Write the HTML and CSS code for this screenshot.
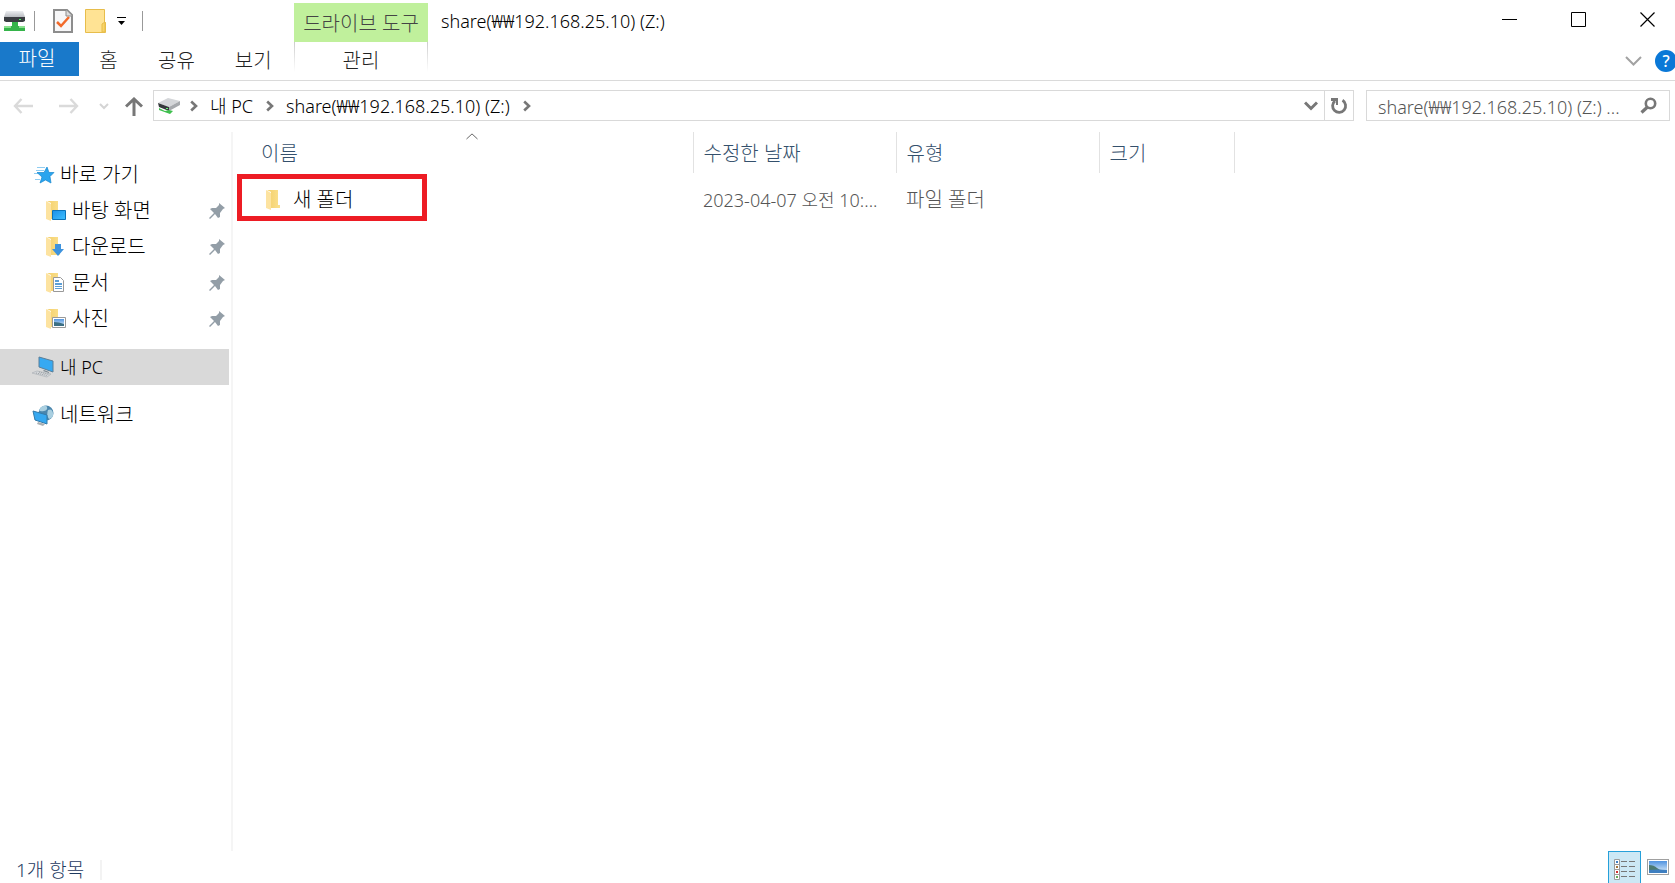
FILE: index.html
```html
<!DOCTYPE html>
<html lang="ko">
<head>
<meta charset="utf-8">
<title>share(₩₩192.168.25.10) (Z:)</title>
<link rel="stylesheet" href="styles.css">
</head>
<body>
<svg class="defs" aria-hidden="true">
  <defs>
    <linearGradient id="gold" x1="0" x2="1"><stop offset="0" stop-color="#f3cf6b"/><stop offset="1" stop-color="#fbe08d"/></linearGradient>
    <linearGradient id="blue" x1="0" y1="0" x2="1" y2="1"><stop offset="0" stop-color="#1a8fe8"/><stop offset="1" stop-color="#3fc0ff"/></linearGradient>
    <linearGradient id="metal" x1="0" x2="0" y1="0" y2="1"><stop offset="0" stop-color="#eceef1"/><stop offset="1" stop-color="#b9bcc1"/></linearGradient>
    <linearGradient id="sky" x1="0" x2="0" y1="0" y2="1"><stop offset="0" stop-color="#4f93e0"/><stop offset="1" stop-color="#e3f1fa"/></linearGradient>
    <symbol id="folder" viewBox="0 0 14 20"><path d="M1 0h11v15h2v3H5V2z" fill="url(#gold)"/><path d="M0 0l5 3v17l-5-2z" fill="#fde3a0"/></symbol>
    <symbol id="pin" viewBox="0 0 16 16"><path d="M10 0l6 5-2 1-3 4v4l-2 1-3-4-5 5-1-1 5-5-4-4 2-1 4 0 3-3z" fill="#939ea7"/></symbol>
    <symbol id="chev" viewBox="0 0 8 12"><path d="M1.200 1.500L6 6 1.200 10.500" fill="none" stroke="#777" stroke-width="2.600"/></symbol>
    <symbol id="photo" viewBox="0 0 22 16"><path d="M0 0h22v16H0z" fill="#a0a0a0"/><path d="M1 1h20v14H1z" fill="#fff"/><path d="M2 2h18v12H2z" fill="url(#sky)"/><path d="M2 6q5 0 8 3t10 2v1H2z" fill="#4c7a72"/><path d="M2 11q9-1 18 0v3H2z" fill="#3f7fc0"/></symbol>
  </defs>
</svg>
<div class="window">
  <header class="ribbon">
    <div class="quick">
      <svg width="22" height="22" viewBox="0 0 22 22" aria-hidden="true"><path d="M2 1h17l2 6H0z" fill="url(#metal)"/><path d="M0 7h21v4l-2 1H2l-2-1z" fill="#3a3d42"/><path d="M15 9h2v1h-2z" fill="#4df06a"/><path d="M8 12h6v4h7v5H0v-5h8z" fill="#35b44a"/><path d="M0 16h7v2H0zM15 16h6v2h-6z" fill="#8be08f"/></svg>
      <i class="bar"></i>
      <button class="plain props" aria-label="속성"><svg width="20" height="24" viewBox="0 0 20 24"><path d="M1 1h13l5 5v17H1z" fill="#f7f7f8" stroke="#8d8d8d" stroke-width="2"/><path d="M13 1v6h6" fill="#ddd" stroke="#8d8d8d"/><path d="M4 13l4 4 8-9" fill="none" stroke="#f26a2a" stroke-width="2.500"/></svg></button>
      <button class="plain newf" aria-label="새 폴더 만들기"><svg width="21" height="24" viewBox="0 0 21 24"><path d="M.5.500h19v13h1v10H.5z" fill="#ffe394" stroke="#e7bd4b"/><path d="M17 23v-8l3-2v10z" fill="#f9d467" stroke="#e7bd4b"/></svg></button>
      <button class="plain" aria-label="빠른 실행 도구 모음 사용자 지정"><svg width="9" height="8" viewBox="0 0 9 8"><path d="M0 0h9v1H0zM1 4h7L4.500 8z" fill="#000"/></svg></button>
      <i class="bar end"></i>
    </div>
    <div class="context">드라이브 도구</div>
    <div class="title">share(₩₩192.168.25.10) (Z:)</div>
    <div class="controls">
      <button class="plain" aria-label="최소화"><svg width="15" height="15" viewBox="0 0 15 15"><path d="M0 7h15v1H0z"/></svg></button>
      <button class="plain" aria-label="최대화"><svg width="15" height="15" viewBox="0 0 15 15"><path d="M.5.500h14v14H.5z" fill="none" stroke="#000"/></svg></button>
      <button class="plain" aria-label="닫기"><svg width="15" height="15" viewBox="0 0 15 15"><path d="M.5.500l14 14M14.500.500l-14 14" fill="none" stroke="#000" stroke-width="1.200"/></svg></button>
    </div>
    <nav class="tabs">
      <button class="tab file">파일</button>
      <button class="tab home">홈</button>
      <button class="tab">공유</button>
      <button class="tab">보기</button>
    </nav>
    <button class="tab manage">관리</button>
    <div class="extras">
      <button class="plain" aria-label="리본 확장"><svg width="17" height="10" viewBox="0 0 17 10"><path d="M1 1l7.500 7.500L16 1" fill="none" stroke="#a2a2a2" stroke-width="2"/></svg></button>
      <button class="help" aria-label="도움말">?</button>
    </div>
  </header>

  <div class="navbar">
    <div class="arrows">
      <button class="plain" aria-label="뒤로"><svg width="20" height="16" viewBox="0 0 20 16"><path d="M8.500 1L2 8l6.500 7M2 8h18" fill="none" stroke="#dadada" stroke-width="2.400"/></svg></button>
      <button class="plain fwd" aria-label="앞으로"><svg width="20" height="16" viewBox="0 0 20 16"><path d="M11.500 1L18 8l-6.500 7M18 8H0" fill="none" stroke="#dadada" stroke-width="2.400"/></svg></button>
      <button class="plain recent" aria-label="최근 위치"><svg width="10" height="7" viewBox="0 0 10 7"><path d="M1 1l4 4 4-4" fill="none" stroke="#d4d4d4" stroke-width="2"/></svg></button>
      <button class="plain" aria-label="위로"><svg width="18" height="19" viewBox="0 0 18 19"><path d="M1 9.500L9 2l8 7.500M9 2v17" fill="none" stroke="#777" stroke-width="3"/></svg></button>
    </div>
    <div class="address">
      <svg class="drive" width="24" height="17" viewBox="0 0 24 17" aria-hidden="true"><path d="M1 6L11 1l12 3-11 6z" fill="#d4d6d9"/><path d="M1 6l11 4v4L2 10z" fill="#35383c"/><path d="M12 10l11-6v4l-11 6z" fill="#a6a9ad"/><path d="M2 11l6 3 4-1 4 1-3 3-11-4z" fill="#3fc04e"/><path d="M9 11h2v1H9z" fill="#5cff70"/></svg>
      <svg class="sep" width="8" height="12"><use href="#chev"/></svg>
      <a href="#pc">내 PC</a>
      <svg class="sep" width="8" height="12"><use href="#chev"/></svg>
      <a href="#share">share(₩₩192.168.25.10) (Z:)</a>
      <svg class="sep" width="8" height="12"><use href="#chev"/></svg>
      <button class="plain drop" aria-label="이전 위치"><svg width="14" height="10" viewBox="0 0 14 10"><path d="M1 1.500l6 6 6-6" fill="none" stroke="#777" stroke-width="3"/></svg></button>
      <button class="plain refresh" aria-label="새로 고침"><svg width="18" height="18" viewBox="0 0 18 18"><path d="M12.500 3.300a6.500 6.500 0 1 1-7.500.500" fill="none" stroke="#777" stroke-width="2.800"/><path d="M1 1h7v7H6V4H1z" fill="#777"/></svg></button>
    </div>
    <div class="search">
      <input type="text" aria-label="검색" placeholder="share(₩₩192.168.25.10) (Z:) ...">
      <button class="plain" aria-label="검색 실행"><svg width="17" height="17" viewBox="0 0 17 17"><circle cx="10.500" cy="6.500" r="4.700" fill="none" stroke="#777" stroke-width="2.600"/><path d="M7.500 10L1.500 15.500" stroke="#777" stroke-width="3.200"/></svg></button>
    </div>
  </div>

  <div class="body">
    <nav class="tree">
      <a class="node top" href="#quick"><svg width="24" height="20" viewBox="0 0 24 20"><path d="M5 2h8v1H5zM4 5h8v1H4zM2 8h5v1H2zM3 14h5v1H3z" fill="#8fcdf2"/><path d="M15 2l2 5.500H22l-4 4 1 6.500-5.500-3L8 18l2-6-5-4.500h7z" fill="#29a4ee" stroke="#1786cf" stroke-width=".7"/></svg>바로 가기</a>
      <a class="node" href="#desktop"><svg width="20" height="20" viewBox="0 0 20 20"><use href="#folder" width="14" height="20"/><path d="M6.500 9.500h13v9h-13z" fill="url(#blue)" stroke="#0b72b8"/></svg>바탕 화면<svg class="pin" width="16" height="16"><use href="#pin"/></svg></a>
      <a class="node" href="#downloads"><svg width="20" height="20" viewBox="0 0 20 20"><use href="#folder" width="14" height="20"/><path d="M9 7h6v5h3l-6 7-6-7h3z" fill="#3e93dd"/></svg>다운로드<svg class="pin" width="16" height="16"><use href="#pin"/></svg></a>
      <a class="node" href="#documents"><svg width="20" height="20" viewBox="0 0 20 20"><use href="#folder" width="14" height="20"/><path d="M7.500 4.500h7l3 3v11h-10z" fill="#fff" stroke="#999"/><path d="M9 7h4v2H9zM9 10h7v2H9zM9 13h7v1H9zM9 15h7v1H9z" fill="#5c9fd6"/></svg>문서<svg class="pin" width="16" height="16"><use href="#pin"/></svg></a>
      <a class="node" href="#pictures"><svg width="20" height="20" viewBox="0 0 20 20"><use href="#folder" width="14" height="20"/><path d="M6.500 8.500h13v10h-13z" fill="#fff" stroke="#999"/><path d="M8 10h10v7H8z" fill="url(#sky)"/><path d="M8 13q5 0 10 2v2H8z" fill="#3c6f83"/></svg>사진<svg class="pin" width="16" height="16"><use href="#pin"/></svg></a>
      <a class="node top spaced selected latin" href="#pc"><svg width="24" height="22" viewBox="0 0 24 22"><path d="M7 1l14 4v11L7 11z" fill="#36a9f2" stroke="#5b7f98"/><path d="M12 14l5 2v1l-6-2z" fill="#7b8790"/><path d="M5 15l14 3-4 3L0 17z" fill="#d5d8db" stroke="#aeb3b7" stroke-width=".7"/><path d="M4 17l11 2.500M7 16l10 2.500" stroke="#9a9fa3" stroke-dasharray="1 1"/></svg>내 PC</a>
      <a class="node top spaced" href="#network"><svg width="24" height="22" viewBox="0 0 24 22"><circle cx="14" cy="9" r="7.500" fill="#4a86ad"/><path d="M9 3q5-3 6 0t-3 4-5-1zM16 6q4-2 5 3t-4 6q-3-4-1-9z" fill="#a9cfe0"/><path d="M1 7l14 4v9L3 16z" fill="#35a8f0" stroke="#337aa9"/><path d="M6 18l7 2-2 2-6-2z" fill="#a9afb3"/></svg>네트워크</a>
    </nav>
    <main class="list">
      <table>
        <colgroup><col class="c-name"><col class="c-date"><col class="c-date"><col class="c-size"><col></colgroup>
        <thead><tr>
          <th class="name">이름<svg class="sort" width="12" height="7" viewBox="0 0 12 7"><path d="M.5 6L6 .900 11.500 6" fill="none" stroke="#666"/></svg></th>
          <th>수정한 날짜</th><th>유형</th><th>크기</th><th class="rest"></th>
        </tr></thead>
        <tbody><tr>
          <td class="name"><span class="item"><svg width="14" height="20"><use href="#folder"/></svg>새 폴더</span><span class="mark"></span></td>
          <td class="latin">2023-04-07 오전 10:...</td><td>파일 폴더</td><td></td><td></td>
        </tr></tbody>
      </table>
    </main>
  </div>

  <footer class="status">
    <span class="count">1개 항목</span>
    <button class="view on" aria-label="자세히"><svg width="22" height="22" viewBox="0 0 22 22"><path d="M.5.500h5v5h-5zM.5 5.500h5v5h-5zM.5 10.500h5v5h-5zM.5 15.500h5v5h-5z" fill="#fff" stroke="#9b9b9b"/><path d="M2 2h2v2H2z" fill="#3e7fc4"/><path d="M2 7h2v2H2z" fill="#a5763c"/><path d="M2 12h2v2H2z" fill="#d03030"/><path d="M2 17h2v2H2z" fill="#5fae58"/><path d="M7 2h6v1H7zM15 2h6v1h-6zM7 7h6v1H7zM15 7h6v1h-6zM7 12h6v1H7zM15 12h6v1h-6zM7 17h6v1H7zM15 17h6v1h-6z" fill="#777"/></svg></button>
    <button class="view" aria-label="큰 아이콘"><svg width="22" height="16"><use href="#photo"/></svg></button>
  </footer>
</div>
</body>
</html>
```
FILE: styles.css
```css
* { box-sizing: border-box; }
body {
  margin: 0;
  overflow: hidden;
  background: #fff;
  color: #000;
  font: 300 18px/24px "Noto Sans", "Noto Sans CJK KR", sans-serif;
}
svg { display: block; flex: none; }
button, input { font: inherit; color: inherit; }
a { color: inherit; text-decoration: none; }
.defs { position: absolute; width: 0; height: 0; }
.plain { border: 0; padding: 0; background: none; display: flex; align-items: center; justify-content: center; }
.window { min-height: 100vh; display: flex; flex-direction: column; }

.ribbon {
  display: grid;
  grid-template-columns: 294px 134px 1fr auto;
  grid-template-rows: 42px 38px;
  border-bottom: 1px solid #dadada;
}
.quick { display: flex; align-items: center; padding-left: 4px; }
.bar { width: 1px; height: 20px; margin-left: 8px; background: #999; }
.bar.end { margin-left: 16px; }
.props { margin-left: 18px; }
.newf { margin: 0 11px 0 12px; }
.context { margin-top: 3px; padding-top: 9px; background: #c0f09c; color: #444; font-size: 20px; text-align: center; white-space: nowrap; }
.title { padding: 9px 0 0 13px; white-space: nowrap; }
.controls { display: flex; gap: 54px; padding: 0 20px 3px 0; align-items: center; }
.tabs { display: flex; align-items: flex-start; }
.tab { border: 0; padding: 0 20px; height: 38px; background: none; color: #222; font-size: 20px; white-space: nowrap; }
.tab.file { width: 79px; height: 34px; background: #1979ca; color: #fff; padding: 0 5px 0 0; }
.tab.home { width: 59px; }
.tab.manage {
  padding: 0;
  background: linear-gradient(#ccc, #fff) left / 1px 30px no-repeat, linear-gradient(#ccc, #fff) right / 1px 30px no-repeat;
  background-position: left top, right top;
}
.extras { grid-column: 4; display: flex; justify-content: flex-end; align-items: center; gap: 13px; margin-right: -2px; }
.help { width: 22px; height: 22px; border: 0; border-radius: 50%; padding: 0; background: #0a78d7; color: #fff; font-size: 16px; font-weight: 500; line-height: 22px; }

.navbar { display: flex; padding: 9px 5px 10px 13px; height: 51px; }
.arrows { display: flex; align-items: center; width: 140px; flex: none; }
.fwd { margin-left: 26px; }
.recent { margin: 0 16px 0 20px; }
.address { flex: 1; display: flex; align-items: center; border: 1px solid #d9d9d9; height: 31px; padding-left: 3px; white-space: nowrap; }
.address .sep { margin: 0 12px 0 9px; }
.address a + .sep { margin-left: 13px; }
.drop { margin-left: auto; width: 27px; height: 29px; }
.refresh { width: 29px; height: 29px; border-left: 1px solid #d9d9d9; }
.search { width: 304px; margin-left: 12px; height: 31px; border: 1px solid #d9d9d9; display: flex; align-items: center; padding: 0 12px 0 11px; }
.search input { flex: 1; min-width: 0; border: 0; padding: 2px 0 0; outline: 0; background: none; }
.search input::placeholder { color: #555; opacity: 1; }

.body { flex: 1; display: flex; }
.tree { width: 233px; flex: none; padding: 25px 2px 0 0; border-right: 2px solid #f5f5f5; font-size: 20px; }
.node { display: flex; align-items: center; height: 36px; padding: 0 4px 0 46px; gap: 6px; white-space: nowrap; }
.node.top { padding-left: 32px; gap: 4px; }
.spaced { margin-top: 12px; }
.selected { background: #d9d9d9; }
.latin { font-size: 18px; }
.pin { margin-left: auto; }

.list { flex: 1; }
table { width: 100%; border-collapse: collapse; table-layout: fixed; font-size: 20px; }
.c-name { width: 460px; }
.c-date { width: 203px; }
.c-size { width: 135px; }
th, td { padding: 2px 0 0 10px; text-align: left; font-weight: inherit; white-space: nowrap; }
th { position: relative; height: 41px; color: #34506c; border-right: 1px solid #e2e2e2; }
th.rest { border: 0; }
td { height: 52px; color: #555; }
th.name { padding-left: 28px; }
td.name { position: relative; padding-left: 33px; color: #000; }
.item { display: flex; align-items: center; gap: 13px; }
.sort { position: absolute; left: 233px; top: 1px; }
.mark { position: absolute; left: 4px; top: 1px; width: 190px; height: 47px; border: 5px solid #ed1c24; }

.status { height: 32px; display: flex; align-items: flex-start; padding-right: 1px; color: #1e3a5f; }
.count { margin: 9px auto 0 0; padding: 0 16px; border-right: 2px solid #f3f3f3; font-size: 19px; line-height: 20px; }
.view { border: 1px solid transparent; background: none; padding: 7px 5px; height: 32px; width: 33px; }
.view.on { border-color: #26a0da; border-bottom: 0; background: #cce8f5; }
```
